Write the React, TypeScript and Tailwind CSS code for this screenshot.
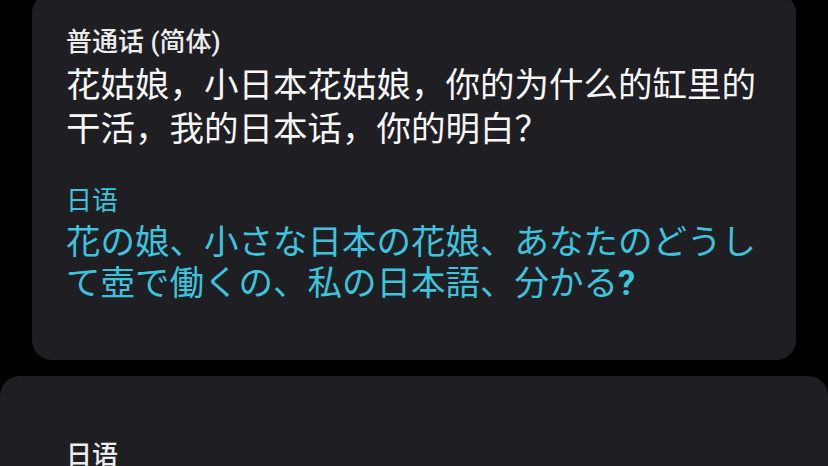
import React from "react";

export default function App() {
  return (
    <div className="w-[828px] h-[466px] overflow-hidden bg-black" style={{ fontFamily: 'Roboto, "Noto Sans CJK SC", sans-serif' }}>
      <div className="mx-[32px] mt-[-7px] rounded-[20px] bg-[#1f1e23] pl-[34px] pr-[30px] pt-[33px] pb-[56px]">
        <div className="text-[26px] leading-[32px] font-medium text-[#ededed]">普通话 (简体)</div>
        <div className="mt-[5px] text-[34.5px] leading-[44px] text-[#f7f7f7]">
          花姑娘，小日本花姑娘，你的为什么的缸里的干活，我的日本话，你的明白？
        </div>
        <div className="mt-[34px] text-[26px] leading-[32px] text-[#3cc4de]">日语</div>
        <div
          className="mt-[5px] text-[34.5px] leading-[41px] text-[#3cc4de]"
          style={{ fontFamily: 'Roboto, "Noto Sans CJK JP", sans-serif' }}
        >
          花の娘、小さな日本の花娘、あなたのどうして壺で働くの、私の日本語、分かる<span className="font-bold">?</span>
        </div>
      </div>
      <div className="mt-[16px] h-[200px] rounded-[20px] bg-[#1f1e23] pl-[66px] pt-[63px]">
        <div className="text-[26px] leading-[32px] font-medium text-[#ededed]">日语</div>
      </div>
    </div>
  );
}
